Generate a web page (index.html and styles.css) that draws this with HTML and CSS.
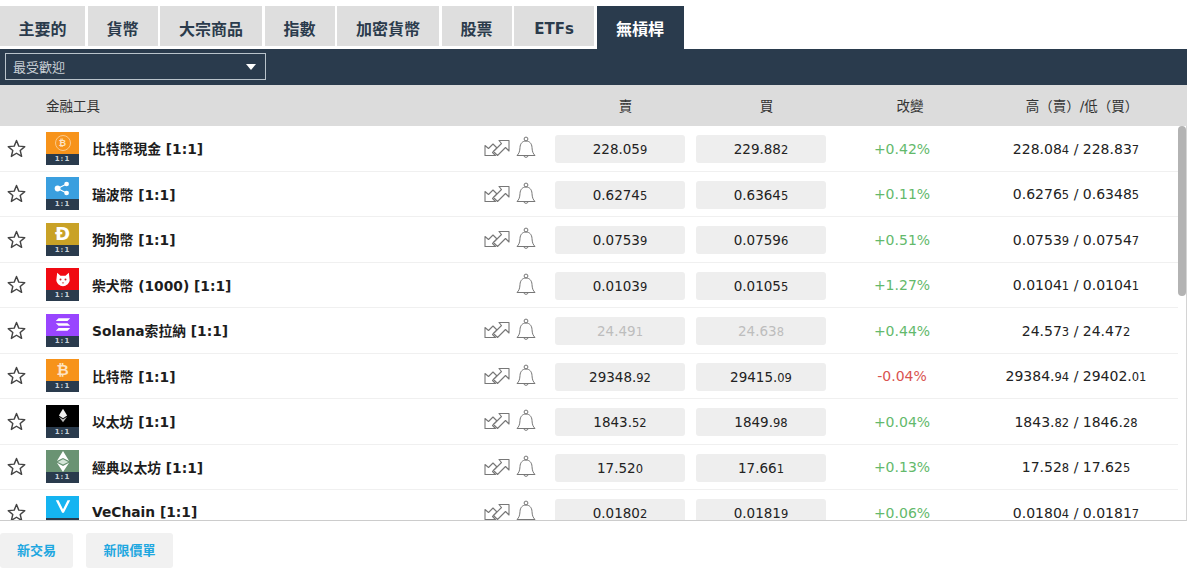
FILE: index.html
```html
<!DOCTYPE html>
<html lang="zh-Hant">
<head>
  <meta charset="UTF-8" />
  <title>無槓桿</title>
  <link rel="stylesheet" href="styles.css">
</head>
<body>
  <svg class="defs" width="0" height="0">
    <symbol id="star" viewBox="0 0 20 20">
      <path d="M10 1.600l2.400 5.900 6.300.5-4.800 4.100 1.500 6.200L10 15l-5.400 3.300 1.500-6.200L1.300 8l6.300-.5z" fill="none" stroke="#444" stroke-width="1.500" stroke-linejoin="round"/>
    </symbol>
    <symbol id="trade" viewBox="0 0 26 18">
      <path d="M1 6.500V16.500H11.500L8.500 13.500 13 9 9 5 4.500 9.500z" fill="none" stroke="#777" stroke-width="1.100" stroke-linejoin="round"/>
      <path d="M15 1.500H25V12L21.500 8.500 13.500 16.500 9.500 12.500 17.500 4.500z" fill="#fff" stroke="#777" stroke-width="1.100" stroke-linejoin="round"/>
    </symbol>
    <symbol id="bell" viewBox="0 0 20 24">
      <path d="M1 19.500c2-2 2.800-4 3-8 .2-4 2.500-6.500 6-6.500s5.800 2.500 6 6.500c.2 4 1 6 3 8z" fill="none" stroke="#777" stroke-width="1"/>
      <circle cx="10" cy="3" r="1.900" fill="none" stroke="#777" stroke-width="1"/>
      <path d="M7.800 19.700a2.300 2.300 0 0 0 4.400 0" fill="none" stroke="#777" stroke-width="1"/>
    </symbol>
  </svg>

  <div class="tabs">
    <div class="tab">主要的</div>
    <div class="tab tab-fx">貨幣</div>
    <div class="tab tab-com">大宗商品</div>
    <div class="tab tab-fx">指數</div>
    <div class="tab tab-com">加密貨幣</div>
    <div class="tab tab-fx">股票</div>
    <div class="tab tab-etf">ETFs</div>
    <div class="tab active">無槓桿</div>
  </div>

  <div class="filter-bar">
    <div class="filter-select">最受歡迎<span class="caret"></span></div>
  </div>

  <div class="head-row">
    <div class="col-name">金融工具</div>
    <div class="col-price">賣</div>
    <div class="col-price">買</div>
    <div class="col-change">改變</div>
    <div class="col-range">高（賣）/低（買）</div>
  </div>

  <div class="table-body">
    <div class="row">
      <svg class="star"><use href="#star"/></svg>
      <div class="logo"><div class="logo-top bch"><span class="coin">₿</span></div><div class="logo-ratio">1:1</div></div>
      <div class="name">比特幣現金 [1:1]</div>
      <svg class="trade"><use href="#trade"/></svg>
      <svg class="bell"><use href="#bell"/></svg>
      <div class="price">228.05<small>9</small></div>
      <div class="price">229.88<small>2</small></div>
      <div class="change up">+0.42%</div>
      <div class="range">228.08<small>4</small> / 228.83<small>7</small></div>
    </div>
    <div class="row">
      <svg class="star"><use href="#star"/></svg>
      <div class="logo"><div class="logo-top xrp">
        <svg class="glyph" viewBox="0 0 20 16"><circle cx="4" cy="8" r="3.200" fill="#fff"/><circle cx="14" cy="3" r="2.600" fill="#fff"/><circle cx="14" cy="13" r="2.600" fill="#fff"/><path d="M4 8L14 3M4 8l10 5" stroke="#fff" stroke-width="1.500"/></svg>
      </div><div class="logo-ratio">1:1</div></div>
      <div class="name">瑞波幣 [1:1]</div>
      <svg class="trade"><use href="#trade"/></svg>
      <svg class="bell"><use href="#bell"/></svg>
      <div class="price">0.6274<small>5</small></div>
      <div class="price">0.6364<small>5</small></div>
      <div class="change up">+0.11%</div>
      <div class="range">0.6276<small>5</small> / 0.6348<small>5</small></div>
    </div>
    <div class="row">
      <svg class="star"><use href="#star"/></svg>
      <div class="logo"><div class="logo-top doge"><span class="coin-big">Ð</span></div><div class="logo-ratio">1:1</div></div>
      <div class="name">狗狗幣 [1:1]</div>
      <svg class="trade"><use href="#trade"/></svg>
      <svg class="bell"><use href="#bell"/></svg>
      <div class="price">0.0753<small>9</small></div>
      <div class="price">0.0759<small>6</small></div>
      <div class="change up">+0.51%</div>
      <div class="range">0.0753<small>9</small> / 0.0754<small>7</small></div>
    </div>
    <div class="row">
      <svg class="star"><use href="#star"/></svg>
      <div class="logo"><div class="logo-top shib">
        <svg class="glyph" viewBox="0 0 20 18"><path d="M3 1l4 3.500h6L17 1l1 9c-.5 4-4 7-8 7s-7.500-3-8-7z" fill="#fff"/><circle cx="7" cy="9" r="1.200" fill="#c22"/><circle cx="13" cy="9" r="1.200" fill="#c22"/><path d="M8.500 12.500h3L10 14z" fill="#c22"/></svg>
      </div><div class="logo-ratio">1:1</div></div>
      <div class="name">柴犬幣 (1000) [1:1]</div>
      <div class="trade"></div>
      <svg class="bell"><use href="#bell"/></svg>
      <div class="price">0.0103<small>9</small></div>
      <div class="price">0.0105<small>5</small></div>
      <div class="change up">+1.27%</div>
      <div class="range">0.0104<small>1</small> / 0.0104<small>1</small></div>
    </div>
    <div class="row">
      <svg class="star"><use href="#star"/></svg>
      <div class="logo"><div class="logo-top sol">
        <svg class="glyph" viewBox="0 0 20 16"><path d="M5 1h13l-3 3H2zM2 6.500h13l3 3H5zM5 12h13l-3 3H2z" fill="#fff"/></svg>
      </div><div class="logo-ratio">1:1</div></div>
      <div class="name">Solana索拉納 [1:1]</div>
      <svg class="trade"><use href="#trade"/></svg>
      <svg class="bell"><use href="#bell"/></svg>
      <div class="price muted">24.49<small>1</small></div>
      <div class="price muted">24.63<small>8</small></div>
      <div class="change up">+0.44%</div>
      <div class="range">24.57<small>3</small> / 24.47<small>2</small></div>
    </div>
    <div class="row">
      <svg class="star"><use href="#star"/></svg>
      <div class="logo"><div class="logo-top btc"><span class="coin-big btc-sign">₿</span></div><div class="logo-ratio">1:1</div></div>
      <div class="name">比特幣 [1:1]</div>
      <svg class="trade"><use href="#trade"/></svg>
      <svg class="bell"><use href="#bell"/></svg>
      <div class="price">29348.<small>92</small></div>
      <div class="price">29415.<small>09</small></div>
      <div class="change down">-0.04%</div>
      <div class="range">29384.<small>94</small> / 29402.<small>01</small></div>
    </div>
    <div class="row">
      <svg class="star"><use href="#star"/></svg>
      <div class="logo"><div class="logo-top eth">
        <svg class="glyph" viewBox="0 0 20 20"><path d="M10 1l5.500 9L10 13.500 4.500 10z" fill="#eee"/><path d="M10 15l5.500-3.500L10 19l-5.500-7.500z" fill="#bbb"/></svg>
      </div><div class="logo-ratio">1:1</div></div>
      <div class="name">以太坊 [1:1]</div>
      <svg class="trade"><use href="#trade"/></svg>
      <svg class="bell"><use href="#bell"/></svg>
      <div class="price">1843.<small>52</small></div>
      <div class="price">1849.<small>98</small></div>
      <div class="change up">+0.04%</div>
      <div class="range">1843.<small>82</small> / 1846.<small>28</small></div>
    </div>
    <div class="row">
      <svg class="star"><use href="#star"/></svg>
      <div class="logo"><div class="logo-top etc">
        <svg class="glyph glyph-tall" viewBox="0 0 20 24"><path d="M10 0l7 11.500L10 8 3 11.500z" fill="#fff"/><path d="M10 9.500l6 3-6 3-6-3z" fill="#d6e6da"/><path d="M10 24l7-10.500L10 17l-7-3.500z" fill="#fff"/></svg>
      </div><div class="logo-ratio">1:1</div></div>
      <div class="name">經典以太坊 [1:1]</div>
      <svg class="trade"><use href="#trade"/></svg>
      <svg class="bell"><use href="#bell"/></svg>
      <div class="price">17.52<small>0</small></div>
      <div class="price">17.66<small>1</small></div>
      <div class="change up">+0.13%</div>
      <div class="range">17.52<small>8</small> / 17.62<small>5</small></div>
    </div>
    <div class="row">
      <svg class="star"><use href="#star"/></svg>
      <div class="logo"><div class="logo-top vet">
        <svg class="glyph" viewBox="0 0 20 16"><path d="M2 1h3l5 10 5-10h3l-7 14h-2z" fill="#fff"/></svg>
      </div><div class="logo-ratio">1:1</div></div>
      <div class="name">VeChain [1:1]</div>
      <svg class="trade"><use href="#trade"/></svg>
      <svg class="bell"><use href="#bell"/></svg>
      <div class="price">0.0180<small>2</small></div>
      <div class="price">0.0181<small>9</small></div>
      <div class="change up">+0.06%</div>
      <div class="range">0.0180<small>4</small> / 0.0181<small>7</small></div>
    </div>
    <div class="scrollbar"></div>
  </div>

  <div class="actions">
    <div class="action-btn">新交易</div>
    <div class="action-btn action-limit">新限價單</div>
  </div>
</body>
</html>
```

FILE: styles.css
```css
body {
  margin: 0;
  padding-top: 6px;
  background-color: #fff;
  font-family: "DejaVu Sans", "Noto Sans CJK TC", sans-serif;
  color: #222;
  overflow: hidden;
}

.defs {
  display: block;
  height: 0;
}

.tabs {
  display: flex;
  gap: 2.500px;
  height: 43px;
}

.tab {
  width: 85px;
  height: 40px;
  background-color: #dedede;
  color: #2b3b4c;
  font-weight: bold;
  font-size: 16px;
  line-height: 47px;
  text-align: center;
}

.tab-fx {
  width: 70px;
}

.tab-com {
  width: 102px;
}

.tab-etf {
  width: 80px;
  font-size: 15px;
  line-height: 46px;
}

.tab.active {
  position: relative;
  width: 87px;
  height: 43px;
  background-color: #2a3b4d;
  color: #fff;
}

.filter-bar {
  width: 1187px;
  height: 36px;
  box-sizing: border-box;
  padding: 4px 5px;
  background-color: #2a3b4d;
}

.filter-select {
  display: flex;
  justify-content: space-between;
  align-items: center;
  box-sizing: border-box;
  width: 261px;
  height: 27px;
  padding: 0 7px;
  border: 1px solid #b9c3cb;
  color: #c9d0d6;
  font-size: 13px;
}

.caret {
  width: 0;
  height: 0;
  margin-right: 2px;
  border-left: 5.500px solid transparent;
  border-right: 5.500px solid transparent;
  border-top: 6px solid #fff;
}

.head-row {
  display: flex;
  align-items: center;
  width: 1187px;
  height: 41px;
  padding-bottom: 1px;
  box-sizing: border-box;
  background-color: #dcdcdc;
  color: #333;
  font-size: 13.500px;
}

.col-name {
  width: 555px;
  padding-left: 46px;
  box-sizing: border-box;
}

.col-price {
  width: 141px;
  text-align: center;
}

.col-change {
  width: 146px;
  text-align: center;
}

.col-range {
  width: 198px;
  text-align: center;
}

.table-body {
  position: relative;
  width: 1187px;
  height: 395px;
  box-sizing: border-box;
  border-right: 1px solid #d4d4d4;
  border-bottom: 1px solid #ccc;
  overflow: hidden;
}

.row {
  display: flex;
  align-items: center;
  box-sizing: border-box;
  width: 1178px;
  height: 45.500px;
  border-bottom: 1px solid #f0f0f0;
}

.star {
  width: 19px;
  height: 19px;
  margin-left: 7px;
  margin-right: 20px;
  flex: none;
}

.logo {
  width: 33px;
  height: 33px;
  flex: none;
}

.logo-top {
  display: flex;
  align-items: center;
  justify-content: center;
  height: 22px;
  color: #fff;
  overflow: hidden;
}

.bch {
  background-color: #f7931a;
}

.xrp {
  background-color: #3a9fdf;
}

.doge {
  background-color: #c9a227;
}

.shib {
  background-color: #f00a12;
}

.sol {
  background-color: #9945ff;
}

.btc {
  background-color: #f7931a;
}

.eth {
  background-color: #000;
}

.etc {
  background-color: #6a9373;
}

.vet {
  background-color: #15b4f1;
}

.coin {
  width: 14px;
  height: 14px;
  border: 1px solid #fbc98a;
  border-radius: 50%;
  color: #fde3c3;
  font-size: 9px;
  font-weight: bold;
  line-height: 14px;
  text-align: center;
}

.coin-big {
  font-size: 18px;
  font-weight: bold;
  line-height: 22px;
}

.btc-sign {
  font-size: 15px;
  color: #fde3c3;
}

.glyph {
  width: 18px;
  height: 15px;
}

.glyph-tall {
  height: 21px;
}

.logo-ratio {
  height: 11px;
  background-color: #2a3b4d;
  color: #ccd3d9;
  font-size: 7px;
  font-weight: bold;
  line-height: 11px;
  text-align: center;
  letter-spacing: 1px;
}

.name {
  flex: 1;
  padding-left: 13px;
  font-size: 13.800px;
  font-weight: bold;
  color: #1d1d1d;
}

.trade {
  width: 26px;
  height: 18px;
  margin-right: 6px;
  flex: none;
}

.bell {
  width: 20px;
  height: 24px;
  margin-right: 19px;
  flex: none;
}

.price {
  width: 130px;
  height: 28px;
  margin-top: 2px;
  margin-right: 11px;
  flex: none;
  border-radius: 3px;
  background-color: #eee;
  color: #222;
  font-size: 13.500px;
  line-height: 28px;
  text-align: center;
}

small {
  font-size: 11.500px;
}

.muted {
  color: #bdbdbd;
}

.change {
  width: 130px;
  margin-top: 1px;
  flex: none;
  font-size: 14px;
  text-align: center;
}

.up {
  color: #63b96b;
}

.down {
  color: #d9534f;
}

.range {
  width: 218px;
  margin-top: 1px;
  margin-right: -7px;
  flex: none;
  font-size: 14px;
  text-align: center;
}

.scrollbar {
  position: absolute;
  top: 0;
  right: 0;
  width: 8px;
  height: 170px;
  border-radius: 4px;
  background-color: #b3b3b3;
}

.actions {
  display: flex;
  gap: 13px;
  padding-top: 12px;
}

.action-btn {
  width: 73px;
  height: 35px;
  border-radius: 3px;
  background-color: #f1f1f1;
  color: #1ea7e0;
  font-size: 13px;
  font-weight: bold;
  line-height: 35px;
  text-align: center;
}

.action-limit {
  width: 87px;
}
```
